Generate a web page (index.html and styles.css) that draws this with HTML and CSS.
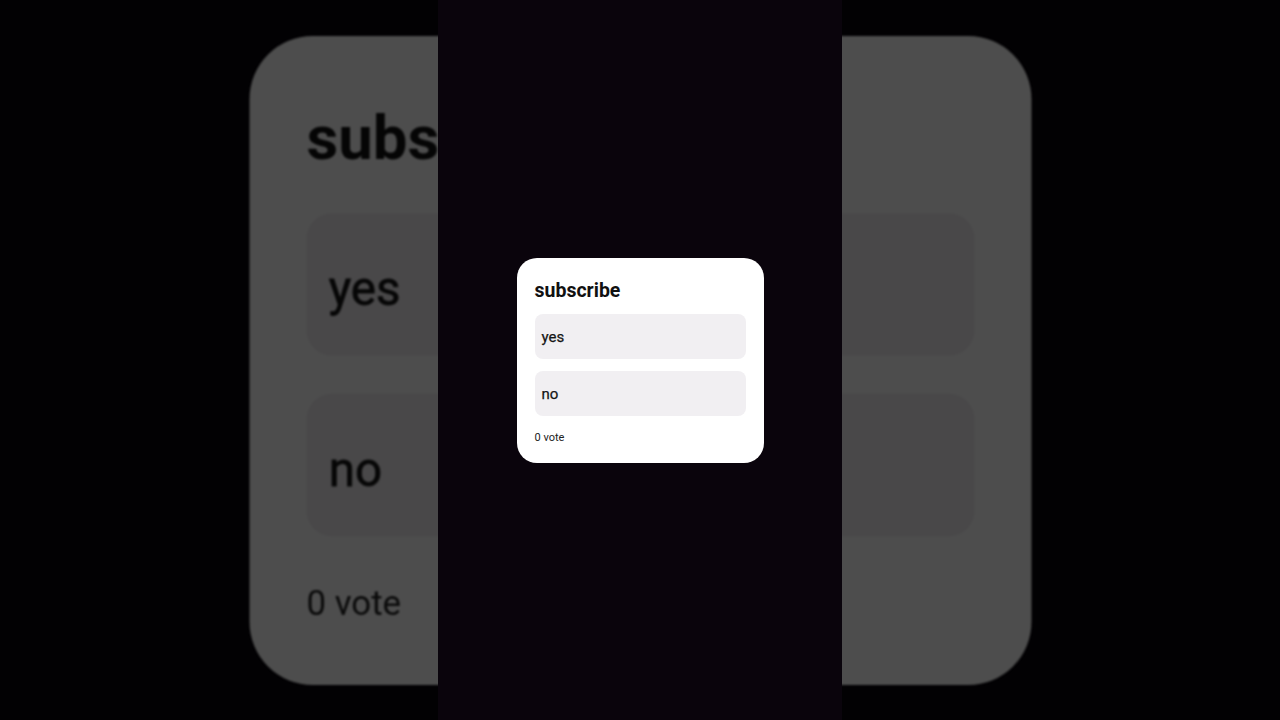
FILE: index.html
```html
<!DOCTYPE html>
<html lang="en">
<head>
<meta charset="utf-8">
<title>subscribe poll</title>
<link rel="stylesheet" href="styles.css">
</head>
<body>
<div class="stage">
  <div class="backdrop">
    <div class="poll poll--ghost" aria-hidden="true">
      <div class="poll-title">subscribe</div>
      <div class="poll-options">
        <div class="poll-option">yes</div>
        <div class="poll-option">no</div>
      </div>
      <div class="poll-votes">0 vote</div>
    </div>
  </div>
  <div class="column">
    <div class="poll">
      <div class="poll-title">subscribe</div>
      <div class="poll-options">
        <div class="poll-option">yes</div>
        <div class="poll-option">no</div>
      </div>
      <div class="poll-votes">0 vote</div>
    </div>
  </div>
</div>
</body>
</html>
```

FILE: styles.css
```css
html, body {
  margin: 0;
  padding: 0;
  background: #020103;
  width: 1280px;
  height: 720px;
  overflow: hidden;
}

.stage {
  position: relative;
  width: 1280px;
  height: 720px;
  font-family: Roboto, "Liberation Sans", Arial, sans-serif;
}

.backdrop {
  width: 100%;
  height: 100%;
  display: flex;
  align-items: center;
  justify-content: center;
}

.column {
  position: absolute;
  top: 0;
  bottom: 0;
  left: 438px;
  width: 404px;
  background: #0a040c;
  display: flex;
  align-items: center;
  justify-content: center;
}

.poll {
  box-sizing: border-box;
  width: 247px;
  height: 205px;
  flex: none;
  background: #ffffff;
  border-radius: 20px;
  padding: 21px 18px 0 18px;
  display: flex;
  flex-direction: column;
}

.poll--ghost {
  transform: scale(3.166);
  filter: brightness(0.302) blur(0.4px);
}

.poll-title {
  font-size: 19.5px;
  line-height: 24px;
  font-weight: 700;
  color: #111111;
  margin-bottom: 11px;
}

.poll-options {
  display: flex;
  flex-direction: column;
  gap: 12px;
}

.poll-option {
  height: 45px;
  border-radius: 8px;
  background: #f1eff2;
  display: flex;
  align-items: center;
  padding-left: 7px;
  font-size: 15px;
  font-weight: 400;
  -webkit-text-stroke: 0.25px #151515;
  color: #151515;
  padding-top: 2px;
  box-sizing: border-box;
}

.poll-votes {
  margin-top: 15px;
  font-size: 11px;
  line-height: 14px;
  color: #222222;
}
```
